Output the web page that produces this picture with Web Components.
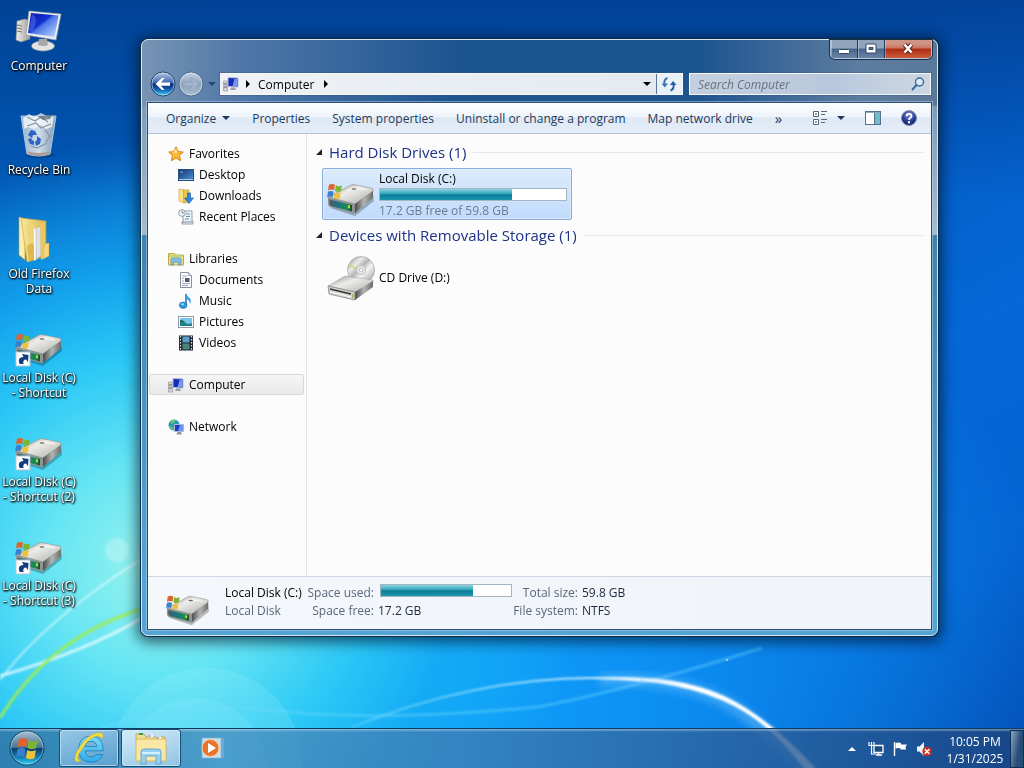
<!DOCTYPE html>
<html lang="en">
<head>
<meta charset="utf-8">
<title>Computer</title>
<style>
html, body { margin: 0; height: 100%; overflow: hidden; }
body { font-family: "Open Sans", "Noto Sans", sans-serif; font-size: 12px; line-height: 15px; color: #000; }
</style>
</head>
<body>
<win-desktop></win-desktop>
<script>
const RESET = `
  *, *::before, *::after { box-sizing: border-box; }
  button, a, input { font: inherit; color: inherit; background: none; border: 0; padding: 0; margin: 0; text-decoration: none; }
`;

const FLAG = (x, y, s) => `<g transform="translate(${x} ${y}) scale(${s})">
  <path d="M1 2q3-2 6.500 0l-1 6q-3-2-6.500 0z" fill="#e0622c"/><path d="M8.500 2.500q3 2 6.500 0l-1 6q-3 2-6.500 0z" fill="#7cb434"/>
  <path d="M0 9.500q3-2 6 0l-1 6q-3-2-6 0z" fill="#3c80cc"/><path d="M7.300 10q3 2 6.500 0l-1 6q-3 2-6.500 0z" fill="#f0c038"/></g>`;

const METAL = `<defs>
  <linearGradient id="top" x1="0" y1="0" x2="1" y2="1"><stop offset="0" stop-color="#8a8a88"/><stop offset=".4" stop-color="#ecece8"/><stop offset="1" stop-color="#acaca8"/></linearGradient>
  <linearGradient id="side" x1="0" y1="0" x2="1" y2="0"><stop offset="0" stop-color="#4a4a4a"/><stop offset=".5" stop-color="#b4b4b2"/><stop offset="1" stop-color="#6c6c6a"/></linearGradient>
  <linearGradient id="teal" x1="0" y1="0" x2="1" y2="0"><stop offset="0" stop-color="#4a5a60"/><stop offset=".4" stop-color="#1c7480"/><stop offset=".8" stop-color="#1c8c50"/><stop offset="1" stop-color="#26402c"/></linearGradient></defs>`;

const DRIVE = METAL + `<path d="M3 38L28 46L47 31L46 24z" fill="#000" opacity=".25"/>
  <path d="M2 27L24 15Q26 14 29 15L44 18Q47 19 46 21L28 34z" fill="url(#top)" stroke="#8c8c8a" stroke-width=".6"/>
  <path d="M28 34L46 21V28L28 43z" fill="url(#side)"/>
  <path d="M1 27L28 34V43.500L3 37Q1 36 1 34z" fill="#8e9494"/>
  <path d="M2.500 29.500L25 35V41.500L4 36Q2.500 35 2.500 33z" fill="url(#teal)"/>
  <path d="M21 35l2 .5v3l-2-.5z" fill="#a8e830"/><path d="M20 21L26 18L40 20" stroke="#fff" fill="none" opacity=".8"/>
  <ellipse cx="27" cy="19" rx="2.500" ry=".8" fill="#666"/>` + FLAG(1, 13, .93);

const ICONS = {
  drive: [48, DRIVE],
  shortcut: [48, DRIVE + `<rect x="1" y="32" width="14" height="14" fill="#fff" stroke="#b8c4d0"/><path d="M4.500 44Q2 37 8.500 37L7 34L13.500 35L13 42L11 39.500Q7.500 39.500 8.500 44z" fill="#123c80"/>`],
  cd: [48, METAL + `<defs><linearGradient id="disc" x1="0" y1="0" x2="1" y2="1"><stop offset="0" stop-color="#8a8a8a"/><stop offset=".3" stop-color="#ececec"/><stop offset=".45" stop-color="#b4b4b4"/><stop offset=".6" stop-color="#f4f4f4"/><stop offset="1" stop-color="#949494"/></linearGradient></defs>
   <circle cx="34" cy="17" r="13.500" fill="url(#disc)" stroke="#a0a0a0" stroke-width=".7"/><path d="M22 12L30 16" stroke="#c8d870" stroke-width="2" opacity=".7"/><circle cx="34" cy="17" r="4.500" fill="#e8e8e8" stroke="#bbb"/><circle cx="34" cy="17" r="1.800" fill="#fff" stroke="#999" stroke-width=".6"/>
   <path d="M1 33L18 23L46 27V30L28 40z" fill="url(#top)" stroke="#999" stroke-width=".5"/><path d="M28 39L46 28V34L28 47z" fill="url(#side)"/><path d="M1 33L28 39V47L2 41z" fill="#d4d4d2" stroke="#777" stroke-width=".7"/><path d="M3 36L24 41" stroke="#333" stroke-width="1.500"/><path d="M3 39L24 44" stroke="#fff"/><path d="M26 41v4" stroke="#8a2" stroke-width="1.200"/>`],
  computer: [48, `<defs><linearGradient id="scr" x1="0" y1="0" x2="1" y2="1"><stop offset="0" stop-color="#0818a0"/><stop offset=".42" stop-color="#1430d0"/><stop offset=".5" stop-color="#4c78e8"/><stop offset="1" stop-color="#c8e0fc"/></linearGradient>
   <linearGradient id="tw" x1="0" y1="0" x2="1" y2="0"><stop offset="0" stop-color="#f0f0ec"/><stop offset="1" stop-color="#9c9c98"/></linearGradient></defs>
   <path d="M2 13L10 11L15 13V31L6 34L1 32z" fill="url(#tw)" stroke="#8a8a86" stroke-width=".6"/><path d="M2 17l5 1M2 20l5 1M2 23l5 1" stroke="#777"/>
   <ellipse cx="28" cy="38" rx="11.500" ry="5" fill="#e4e4e2" stroke="#989898" stroke-width=".6"/><path d="M24 31h8l1 6q-5 2-10 0z" fill="#a8a8a8"/>
   <path d="M14 3L46 6L41 32L11 27z" fill="#eceef0" stroke="#9aa0a8" stroke-width=".7"/><path d="M16 5L43.500 7.500L39.500 29L13 25z" fill="url(#scr)"/><path d="M17 6q8 4 0 18l-3-1z" fill="#4c70e8" opacity=".55"/>`],
  bin: [48, `<defs><linearGradient id="b" x1="0" y1="0" x2="1" y2="0"><stop offset="0" stop-color="#a8bccc"/><stop offset=".5" stop-color="#e8eef2"/><stop offset="1" stop-color="#90a4b8"/></linearGradient></defs>
   <ellipse cx="25" cy="43" rx="15" ry="3" fill="#023" opacity=".3"/><path d="M6 4L12 42Q24 46 35 42L41 4z" fill="url(#b)" opacity=".9" stroke="#c4d8e4"/>
   <path d="M8 6l6-4 5 3 7-4 6 3 7 1-2 10-6 2-5-4-7 4-6-2-4 2z" fill="#fff" opacity=".7"/><path d="M12 5l8 4 6-4 7 5M12 14l9-3 5 5 10-4M30 18l5 6-4 6M16 34l6 2 10-5" stroke="#8494a4" fill="none" stroke-width="1.200"/>
   <path d="M22 4l15-1-2 4-7 1z" fill="#566472" opacity=".7"/><path d="M13 23l3-5 4 1 2 4-4 0-1 3zM22 24l4 3-1 5-4 2-1-4 2-2zM13 27l2 5 4 1v-4l-2-1-1-2z" fill="#2c64c8"/>
   <path d="M12 39q12 4 23 0v3q-12 4-22 0z" fill="#b09c9c"/>`],
  folder: [48, `<defs><linearGradient id="f" x1="0" y1="0" x2="1" y2="0"><stop offset="0" stop-color="#f8e8a0"/><stop offset="1" stop-color="#dcb448"/></linearGradient></defs>
   <path d="M4 1L10 3V44L4 39z" fill="#fbeeb0" stroke="#c8a030" stroke-width=".6"/><path d="M6 2L31 5V40L12 46z" fill="url(#f)" stroke="#c8a030" stroke-width=".6"/><path d="M13 10L19 8V42L13 45z" fill="#f0d478"/>
   <path d="M19 13L23 11V42L19 45z" fill="#fff"/><path d="M21 12L26 10V40L21 43z" fill="#dce0e6" stroke="#a0a0a0" stroke-width=".5"/><path d="M25 8L30 6V42L26 44z" fill="#ecc860"/><path d="M29 28l5-1v13l-6 3z" fill="#f4d87c" stroke="#c8a030" stroke-width=".4"/><path d="M12 30l5-3 2 2v15l-5 2z" fill="#dcb040" opacity=".8"/>`],
  star: [16, `<path d="M8 .8L10.200 5.600L15.300 6.100L11.500 9.500L12.700 14.800L8 12L3.300 14.800L4.500 9.500L.7 6.100L5.800 5.600z" fill="#fbb938" stroke="#dd8418"/><path d="M8 2.500L9.300 6.500L5 7z" fill="#ffe9a0"/>`],
  desktop: [16, `<defs><linearGradient id="g" x2="1" y2="1"><stop offset="0" stop-color="#14386c"/><stop offset="1" stop-color="#4c90dc"/></linearGradient></defs><rect x=".5" y="2.500" width="15" height="11" fill="url(#g)" stroke="#284c80"/><path d="M1 12.500h14" stroke="#a8c8ec"/><path d="M2 5h3" stroke="#8ac"/>`],
  downloads: [16, `<path d="M1 1l5 1v13l-5-2z" fill="#f8e48c" stroke="#d0a838" stroke-width=".7"/><path d="M5 2h6v12l-5 1z" fill="#ecc850" stroke="#c8a030" stroke-width=".7"/><path d="M9.500 5h3v5h3L11 15.500L6.500 10h3z" fill="#2c84dc" stroke="#1858a8" stroke-width=".6"/>`],
  recent: [16, `<path d="M5 2h9v10h1v3H4v-2h1z" fill="#eef2f6" stroke="#7c8a98" stroke-width=".8"/><path d="M8 5h4M8 7.500h4M7 10h4" stroke="#5c94c0"/><circle cx="4" cy="4" r="3.300" fill="#fff" stroke="#8898a8"/><path d="M4 2v2h2" stroke="#456" fill="none" stroke-width=".8"/><path d="M4 13h10" stroke="#7a8a9a"/>`],
  libraries: [16, `<path d="M.5 2.500h6l1 1.500h8v10H.5z" fill="#f4dc84" stroke="#c8a440"/><path d="M1 4h13v2H1z" fill="#b8d880"/><path d="M3 14V8.500q0-1.500 1.500-1.500h7q1.500 0 1.500 1.500V14h-2.500v-3h-5v3z" fill="#84c0e4" stroke="#4c90c0" stroke-width=".7"/>`],
  documents: [16, `<path d="M2.500 .5h8l3 3v12h-11z" fill="#fbfbfb" stroke="#8a929c"/><path d="M10.500.5v3h3" fill="#dde" stroke="#8a929c" stroke-width=".7"/><path d="M4 4h5M4 6.500h2M4 9h2M4 11.500h8M4 13.500h6" stroke="#9caabc"/><rect x="7" y="6" width="4.500" height="4" fill="#4a5c78"/>`],
  music: [16, `<path d="M8 1v11" stroke="#2478c0" stroke-width="1.600"/><ellipse cx="5.200" cy="12.200" rx="3.800" ry="3.200" fill="#2c98dc" stroke="#1c68ac" stroke-width=".6"/><path d="M8 0q1 3 3.500 5 2.500 2 .5 6 0-4-4-5z" fill="#3c9ce0"/><ellipse cx="4.500" cy="11.200" rx="1.500" ry="1" fill="#a8dcf8"/>`],
  pictures: [16, `<rect x=".5" y="2.500" width="15" height="11" fill="#fff" stroke="#8c9cac"/><rect x="2" y="4" width="12" height="8" fill="#78c4ec"/><path d="M2 7q4 0 6 2t6 0v3H2z" fill="#208484"/><path d="M2 6q3 0 5 2H2z" fill="#1c5c48"/>`],
  videos: [16, `<rect x="1" y=".5" width="14" height="15" fill="#1c2430"/><path d="M2.500 1v14M13.500 1v14" stroke="#d8e4f0" stroke-width="1.200" stroke-dasharray="1.500 1.500"/><rect x="4.500" y="1.500" width="7" height="6" fill="#5c9cc8"/><rect x="4.500" y="8.500" width="7" height="6" fill="#4c8478"/>`],
  pc: [16, `<path d="M.5 5h4v10h-4z" fill="#d0d0d4" stroke="#8a8a98" stroke-width=".6"/><path d="M1 8h3M1 11h3" stroke="#667"/><path d="M5 1.500l10 .5v9l-10-.5z" fill="#142cb8" stroke="#b4bcd4"/><path d="M11.500 3h3v7h-5z" fill="#7498ec"/><path d="M8 11.500h4l1 2.500H7z" fill="#9aa0ac"/>`],
  network: [16, `<circle cx="6" cy="6" r="5.500" fill="#2898b8"/><path d="M2 3q3-3 6-2l-2 3-3 1zM1 7l4 1 1 3q-4-1-5-4z" fill="#60c878"/><path d="M6.500 5.500h9v7h-9z" fill="#1c3cc8" stroke="#a8b8d8"/><path d="M12 6h3v6h-5z" fill="#6c94ec"/><path d="M9.500 13h3.500l1 2.500H8.500z" fill="#8c94a4"/>`],
  back: [26, `<defs><linearGradient id="k" x2="0" y2="1"><stop offset="0" stop-color="#b8cce4"/><stop offset=".45" stop-color="#3c68b0"/><stop offset=".5" stop-color="#0c2870"/><stop offset=".75" stop-color="#1468b8"/><stop offset="1" stop-color="#48d8f8"/></linearGradient></defs>
   <circle cx="13" cy="13" r="12" fill="url(#k)" stroke="#24406c"/><circle cx="13" cy="13" r="11" fill="none" stroke="#d8e8f8" opacity=".6"/><path d="M5.500 13L12 7h2.500l-3.500 4.500H20v3.200H11L14.500 19H12z" fill="#fff"/>`],
  forward: [26, `<defs><linearGradient id="k" x2="0" y2="1"><stop offset="0" stop-color="#c8d4e2"/><stop offset=".5" stop-color="#8ca4c0"/><stop offset="1" stop-color="#a8bcd2"/></linearGradient></defs>
   <circle cx="13" cy="13" r="12" fill="url(#k)" stroke="#4c6888"/><circle cx="13" cy="13" r="11" fill="none" stroke="#e8f0f8" opacity=".6"/><path d="M20.500 13L14 7h-2.500l3.500 4.500H6v3.200H15L11.500 19H14z" fill="#a8b8cc" stroke="#8ca0b8" stroke-width=".6"/>`],
  refresh: [16, `<path d="M6.500 2Q2.500 3 3.500 9" stroke="#3478b8" stroke-width="2" fill="none"/><path d="M.5 7.500h6.500L3.800 11.500z" fill="#3478b8"/><path d="M9.500 14.500Q13.500 13 12.500 8" stroke="#285c9c" stroke-width="2" fill="none"/><path d="M9 9h6.500L12 5z" fill="#285c9c"/>`],
  search: [16, `<circle cx="9.500" cy="6" r="4" fill="#dcecf8" stroke="#3c6898" stroke-width="1.400"/><path d="M6.500 9L2.500 13.500" stroke="#3c6898" stroke-width="2" stroke-linecap="round"/>`],
  views: [16, `<g fill="none" stroke="#5c6878"><path d="M1.500 1.500h5v5h-5zM1.500 9.500h5v5h-5z" fill="#fff"/><path d="M3 4h2M3 12h2" stroke="#246"/><path d="M9 1.500h6M9 4.500h4M9 9.500h6M9 12.500h4"/></g>`],
  pane: [16, `<rect x=".5" y="1.500" width="15" height="13" fill="#fff" stroke="#54708c"/><rect x="10" y="3" width="5" height="11" fill="#70bccc"/><path d="M1 2.500h14" stroke="#90a8c0"/><path d="M9.500 3v11" stroke="#54708c"/>`],
  help: [16, `<defs><radialGradient id="h" cy=".3"><stop offset="0" stop-color="#7c94e4"/><stop offset="1" stop-color="#1c2c84"/></radialGradient></defs><circle cx="8" cy="8" r="7.500" fill="url(#h)" stroke="#8c90a8"/><path d="M5.500 6.200Q5.500 3.800 8 3.800T10.500 6Q10.500 7.400 8.800 8.200Q8 8.600 8 10" fill="none" stroke="#fff" stroke-width="1.800"/><circle cx="8" cy="12.300" r="1.200" fill="#fff"/>`],
  orb: [40, `<defs><linearGradient id="o" x2="0" y2="1"><stop offset="0" stop-color="#a8c0d4"/><stop offset=".48" stop-color="#487898"/><stop offset=".52" stop-color="#0c3c6c"/><stop offset=".8" stop-color="#1088c0"/><stop offset="1" stop-color="#40d8f8"/></linearGradient></defs>
   <circle cx="20" cy="20" r="18" fill="url(#o)" stroke="#16405e"/><circle cx="20" cy="20" r="17" fill="none" stroke="#c0e4f4" opacity=".5"/>` + FLAG(10, 8, 1.4)],
  ie: [36, `<defs><linearGradient id="e" x2="0" y2="1"><stop offset="0" stop-color="#78d8f8"/><stop offset="1" stop-color="#30acec"/></linearGradient></defs>
   <path fill-rule="evenodd" d="M33 21H14Q14.500 27.500 20 27.500Q24 27.500 25.500 25H32.500Q29.500 33 20 33Q7 32.500 7 19Q7.500 5.500 20 5.500Q33.500 5.500 33 21zM14.200 16.500H26.200Q25.500 11 20.200 11Q15 11 14.200 16.500z" fill="url(#e)" stroke="#1874b4" stroke-width=".8"/>
   <path d="M6 33Q-1 31 8 17T27 2Q33 1 33 6L31 8Q30.500 4 24 6T10 20Q3 30 9 31z" fill="#f4dc3c" stroke="#c8a824" stroke-width=".5"/>`],
  explorer: [36, `<path d="M3 4h8l2 3h19v3H3z" fill="#f0dc90" stroke="#c4a044" stroke-width=".8"/><path d="M6 4h4" stroke="#3a9c50" stroke-width="2"/><path d="M15 6h5M23 8h5" stroke="#fff" stroke-width="2.500"/><path d="M15 6h3M23 8h3" stroke="#4878b0"/><path d="M3 9h30v22H3z" fill="#f8e8a4" stroke="#d4b050" stroke-width=".8"/><path d="M8 34V22q0-3 3-3h14q3 0 3 3v12h-5v-8H13v8z" fill="#94d0f0" stroke="#5ca0cc" stroke-width=".8"/><path d="M9 23h18" stroke="#d8f0fc" stroke-width="2"/>`],
  wmp: [26, `<rect x="5" y="3" width="19" height="20" fill="#6ca8d0"/><rect x="2" y="3" width="19" height="20" fill="#c4dcec" stroke="#88b4d4" stroke-width=".6"/><circle cx="10.500" cy="13" r="8.500" fill="#e8742c" stroke="#f8d0a8"/><path d="M8 8l8 5-8 5z" fill="#fff"/>`],
  net: [16, `<path d="M6 4.500h9v7H6z" fill="#1c4c80" stroke="#fff" stroke-width="1.300"/><path d="M8 14h6M10.500 12v2" stroke="#fff" stroke-width="1.400"/><path d="M1 1v3.500h5V1M3.500 1v3M3.500 5v8H8" stroke="#fff" fill="none" stroke-width="1.200"/>`],
  flag: [16, `<path d="M2.500 1v14" stroke="#fff" stroke-width="1.400"/><path d="M3.500 2q3-1 5.500 0v1.500h6L13.500 6l.500 2.500H8.500V7.500q-2-1-5 0z" fill="#fff"/>`],
  volume: [16, `<path d="M1 5.500h2.500L8 1v14L3.500 10.500H1z" fill="#eef4fa"/><rect x="6.500" y="6" width="9" height="9" rx="4" fill="#cc3020"/><path d="M8.800 8.200l4.500 4.500M13.300 8.200l-4.500 4.500" stroke="#fff" stroke-width="1.600"/>`]
};

const define = (tag, template) => customElements.define(tag, class extends HTMLElement {
  constructor() { super(); this.attachShadow({ mode: "open" }); }
  connectedCallback() {
    this.shadowRoot.innerHTML = typeof template === "function" ? template(this) : template;
  }
});

define("win-icon", el => {
  const [size, art] = ICONS[el.getAttribute("name")];
  const px = el.getAttribute("size") || size;
  return `<style>:host{display:block;flex:none;width:${px}px;height:${px}px}svg{display:block}</style>
    <svg width="${px}" height="${px}" viewBox="0 0 ${size} ${size}" aria-hidden="true">${art}</svg>`;
});

define("win-caret", `<style>
  :host { display: block; flex: none; border: 4px solid transparent; border-top-color: currentColor; border-bottom: 0; }
  :host([dir-to=right]) { border: 4px solid transparent; border-left-color: currentColor; border-right: 0; }
  :host([dir-to=up]) { border: 4px solid transparent; border-bottom-color: currentColor; border-top: 0; }
</style>`);

define("win-wallpaper", `<style>
  :host { display: block; background:
      radial-gradient(circle farthest-side at 15% 74%, #98f4ec 0, #64e4f4 110px, #2cc8f6 210px, #14acf4cc 300px, #0890ec00 430px) no-repeat,
      radial-gradient(700px 560px at 36% 90%, #14a8fc 0%, #0c90f4 40%, #0468d800 100%),
      linear-gradient(150deg, #0058b4 0%, #0458bc 40%, #0468d8 65%, #0464d4 82%, #0348ac 100%); }
  .shade { position: absolute; inset: 0; background: linear-gradient(#00307c88 0%, #00307c00 26%); }
  svg { position: absolute; inset: 0; width: 100%; height: 100%; }
</style>
<div class="shade"></div>
<svg viewBox="0 0 1024 768" preserveAspectRatio="none" aria-hidden="true">
  <defs><linearGradient id="arc"><stop offset="0" stop-color="#a0ecff" stop-opacity=".3"/><stop offset="1" stop-color="#e8faff"/></linearGradient>
  <linearGradient id="beam"><stop offset="0" stop-color="#fff" stop-opacity=".6"/><stop offset=".4" stop-color="#fff"/></linearGradient>
  <filter id="soft"><feGaussianBlur stdDeviation="4"/></filter><filter id="soft1"><feGaussianBlur stdDeviation="1"/></filter></defs>
  <circle cx="206" cy="764" r="96" fill="#a8f4fc" opacity=".18"/><circle cx="195" cy="770" r="72" fill="#c8fcfc" opacity=".1"/><circle cx="117" cy="550" r="12" fill="#fff" opacity=".25" filter="url(#soft1)"/>
  <g fill="none" filter="url(#soft1)"><path d="M0 676Q90 650 145 616" stroke="#f0ffff" stroke-width="3" opacity=".75"/>
  <path d="M0 680Q30 640 80 602T145 559" stroke="#f0ffff" stroke-width="2" opacity=".6"/>
  <path d="M0 718Q50 636 145 608" stroke="#a0ec50" stroke-width="3" opacity=".9"/>
  <path d="M100 728Q180 700 280 711T537 707Q620 692 762 648" stroke="#70dcfc" stroke-width="3" opacity=".4"/>
  <path d="M352 727Q500 668 640 680" stroke="url(#arc)" stroke-width="2"/></g>
  <path d="M600 680Q690 676 742 712Q780 745 815 775" stroke="#8cd4ff" stroke-width="12" fill="none" filter="url(#soft)" opacity=".4"/>
  <path d="M590 679Q680 671 736 702Q780 727 824 778L811 778Q776 728 734 706Q680 678 590 679z" fill="url(#beam)" filter="url(#soft1)"/>
  <circle cx="727" cy="660" r="1" fill="#b8e0fc"/>
</svg>`);

define("desk-icon", el => `<style>${RESET}
  :host { display: block; width: 78px; height: 104px; }
  button { display: flex; flex-direction: column; align-items: center; gap: 2px; width: 100%; color: #fff; }
  span { width: 76px; text-align: center; text-shadow: 0 1px 2px #000, 1px 1px 2px #000, 0 0 3px #0008; }
</style><button type="button"><win-icon name="${el.getAttribute("icon")}"></win-icon><span><slot></slot></span></button>`);

define("title-bar", `<style>${RESET}
  :host { display: flex; justify-content: flex-end; height: 31px; }
  .caption { display: flex; height: 19px; border: 1px solid #e4eef8aa; border-top: 0; border-radius: 0 0 5px 5px; box-shadow: 0 0 0 1px #18304c; overflow: hidden; }
  button { display: grid; place-items: center; width: 27px; height: 100%; background: linear-gradient(#90a4bc 0 45%, #44648c 50%, #6c84a4); border-right: 1px solid #20385a; box-shadow: inset 1px 0 #ffffff55; }
  .close { width: 46px; border: 0; background: linear-gradient(#d09484 0 20%, #c87460 45%, #b02c14 50%, #cc5c3c); }
  svg { display: block; }
</style>
<div class="caption">
  <button type="button" aria-label="Minimize"><svg width="14" height="12"><rect x="1.500" y="6.500" width="11" height="4" rx="1" fill="#fff" stroke="#34486a"/></svg></button>
  <button type="button" aria-label="Maximize"><svg width="14" height="12"><path d="M2 1h10v9H2z" fill="#fff" stroke="#34486a"/><path d="M5 4.500h4v2H5z" fill="#50709a" stroke="#34486a"/></svg></button>
  <button type="button" class="close" aria-label="Close"><svg width="14" height="12"><path d="M3.500 1.500l7 8M10.500 1.500l-7 8" stroke="#5c1c10" stroke-width="4.500"/><path d="M3.500 1.500l7 8M10.500 1.500l-7 8" stroke="#fff" stroke-width="2.600"/></svg></button>
</div>`);

define("address-row", `<style>${RESET}
  :host { display: flex; align-items: center; height: 26px; padding: 0 1px 0 3px; }
  .nav { display: flex; align-items: center; gap: 2px; margin-right: 4px; color: #1c4878; }
  .nav win-caret { margin-left: 2px; }
  .field { display: flex; align-items: center; height: 22px; border: 1px solid #f4f8fc; box-shadow: 0 0 0 1px #38587c66; }
  .path { flex: 1; background: linear-gradient(90deg, #eef2f6, #e4eaf1); padding-left: 2px; }
  .path > win-icon { margin-right: 7px; }
  .crumb { padding: 0 9px 0 8px; }
  .grow { flex: 1; }
  .drop { padding: 0 5px; }
  .refresh { display: grid; place-items: center; width: 26px; height: 20px; border-left: 1px solid #5c7898; background: #eaf0f7; }
  .search { flex: none; width: 31%; margin-left: 6px; padding: 0 4px 0 8px; background: linear-gradient(90deg, #c4d0df, #b8c8dc 60%, #cdd8e4); }
  input { flex: 1; min-width: 0; height: 20px; outline: 0; font-style: italic; }
  input::placeholder { color: #66727f; opacity: 1; }
</style>
<div class="nav"><button type="button" aria-label="Back"><win-icon name="back"></win-icon></button><button type="button" aria-label="Forward"><win-icon name="forward"></win-icon></button><win-caret></win-caret></div>
<div class="field path"><win-icon name="pc"></win-icon><win-caret dir-to="right"></win-caret><button type="button" class="crumb">Computer</button><win-caret dir-to="right"></win-caret><span class="grow"></span>
<button type="button" class="drop" aria-label="Previous locations"><win-caret></win-caret></button><button type="button" class="refresh" aria-label="Refresh"><win-icon name="refresh"></win-icon></button></div>
<div class="field search"><input type="search" placeholder="Search Computer" aria-label="Search Computer"><win-icon name="search"></win-icon></div>`);

define("command-bar", `<style>${RESET}
  :host { display: flex; align-items: center; gap: 22px; height: 31px; padding: 0 14px 0 18px; color: #1e395b; white-space: nowrap;
    background: linear-gradient(#fdfeff, #eef4fb 45%, #dfe9f5 50%, #e4edf8); border-bottom: 1px solid #b4c4d8; }
  button { display: flex; align-items: center; gap: 6px; }
  .tools { display: flex; align-items: center; margin-left: auto; gap: 20px; }
  .views { gap: 9px; }
  .more { font-size: 15px; }
</style>
<button type="button">Organize <win-caret></win-caret></button><button type="button">Properties</button><button type="button">System properties</button><button type="button">Uninstall or change a program</button><button type="button">Map network drive</button>
<button type="button" class="more" aria-label="More commands">»</button>
<div class="tools"><button type="button" class="views" aria-label="Change your view"><win-icon name="views"></win-icon><win-caret></win-caret></button>
<button type="button" aria-label="Preview pane"><win-icon name="pane"></win-icon></button><button type="button" aria-label="Help"><win-icon name="help"></win-icon></button></div>`);

define("nav-item", el => `<style>${RESET}
  :host { display: block; }
  a { display: flex; align-items: center; gap: 5px; height: 21px; padding-left: 18px; border: 1px solid transparent; white-space: nowrap; }
  :host([child]) a { padding-left: 28px; }
  :host([gap]) { margin-top: 21px; }
  :host([current]) a { background: linear-gradient(#f6f6f6, #e8e8e8); border-color: #d8d8d8; border-radius: 2px; }
</style><a href="#"><win-icon name="${el.getAttribute("icon")}"></win-icon><slot></slot></a>`);

define("nav-pane", `<style>${RESET}
  :host { display: block; width: 159px; flex: none; padding: 9px 2px 0 1px; border-right: 1px solid #dfe5ee; }
</style>
<nav aria-label="Locations">
<nav-item icon="star">Favorites</nav-item><nav-item child icon="desktop">Desktop</nav-item><nav-item child icon="downloads">Downloads</nav-item><nav-item child icon="recent">Recent Places</nav-item>
<nav-item gap icon="libraries">Libraries</nav-item><nav-item child icon="documents">Documents</nav-item><nav-item child icon="music">Music</nav-item><nav-item child icon="pictures">Pictures</nav-item><nav-item child icon="videos">Videos</nav-item>
<nav-item gap current icon="pc">Computer</nav-item><nav-item gap icon="network">Network</nav-item>
</nav>`);

define("capacity-bar", `<style>
  :host { display: block; }
  progress { display: block; appearance: none; width: 100%; height: 13px; border: 1px solid #a4b4c0; background: #fff; }
  progress::-webkit-progress-bar { background: #fff; }
  progress::-webkit-progress-value { background: linear-gradient(#8cd4e0 0%, #38a8bc 40%, #0c7c98 55%, #1c98ac 100%); }
</style><progress max="100" value="71" aria-label="Space used"></progress>`);

define("drive-group", el => `<style>${RESET}
  :host { display: block; }
  header { display: flex; align-items: center; gap: 7px; height: 31px; padding-bottom: 1px; color: #1e3287; }
  h2 { margin: 0; font-size: 15px; line-height: 20px; font-weight: 400; white-space: nowrap; }
  hr { flex: 1; border: 0; border-top: 1px solid #e2e6ee; margin: 0; }
  svg { display: block; flex: none; }
</style><header><svg width="6" height="6" aria-hidden="true"><path d="M6 0V6H0z" fill="#222"/></svg><h2>${el.getAttribute("heading")}</h2><hr></header><slot></slot>`);

define("drive-tile", el => `<style>${RESET}
  :host { display: block; margin-left: 6px; }
  button { display: flex; align-items: center; gap: 4px; width: 250px; height: 52px; padding: 0 4px; border: 1px solid transparent; text-align: left; }
  :host([selected]) button { background: linear-gradient(#dcebfc, #c1dbfc); border-color: #84acdd; border-radius: 2px; box-shadow: inset 0 0 0 1px #eaf4ff88; }
  .text { display: flex; flex-direction: column; flex: 1; gap: 2px; }
  small { font-size: 12px; color: #6c7c90; }
</style><button type="button"><win-icon name="${el.getAttribute("icon")}"></win-icon><span class="text"><span><slot></slot></span>${
  el.hasAttribute("detail") ? `<capacity-bar></capacity-bar><small>${el.getAttribute("detail")}</small>` : ""}</span></button>`);

define("file-list", `<style>
  :host { display: block; flex: 1; min-width: 0; padding: 3px 8px 0 9px; }
</style>
<drive-group heading="Hard Disk Drives (1)"><drive-tile selected icon="drive" detail="17.2 GB free of 59.8 GB">Local Disk (C:)</drive-tile></drive-group>
<drive-group heading="Devices with Removable Storage (1)"><drive-tile icon="cd">CD Drive (D:)</drive-tile></drive-group>`);

define("details-pane", `<style>${RESET}
  :host { display: flex; gap: 15px; height: 53px; padding: 6px 18px; background: linear-gradient(90deg, #f4f7fb, #f0f4fa); border-top: 1px solid #ccd6e4; }
  dl { display: grid; grid-template: 18px 18px / 82px 63px 136px 60px auto; column-gap: 4px; align-items: center; margin: 0; color: #5a6779; white-space: nowrap; }
  dt { justify-self: end; } dd { margin: 0; color: #1e2a3c; }
  .name { justify-self: start; color: #000; } .kind { justify-self: start; }
  capacity-bar { margin: 0 2px 4px 2px; }
</style>
<win-icon name="drive" size="44"></win-icon>
<dl><dt class="name">Local Disk (C:)</dt><dt>Space used:</dt><dd><capacity-bar></capacity-bar></dd><dt>Total size:</dt><dd>59.8 GB</dd>
<dt class="kind">Local Disk</dt><dt>Space free:</dt><dd>17.2 GB</dd><dt>File system:</dt><dd>NTFS</dd></dl>`);

define("explorer-window", `<style>${RESET}
  :host { display: flex; flex-direction: column; padding: 0 5px 5px; border: 1px solid #d4e6f4; border-radius: 7px;
    background:
      linear-gradient(90deg, #7894b4 0, #5078a8 12%, #1c5490 40%, #1c5490 70%, #5c7ca0 90%, #5a7898 100%) 0 0 / 100% 66px no-repeat,
      linear-gradient(#6c8cac, #a4bcd0 195px, #3c84b0 195px, #54a4d4 90%);
    box-shadow: 0 0 0 1px #0c2c48, 0 2px 14px 4px #001428aa; }
  .client { display: flex; flex-direction: column; flex: 1; min-height: 0; border: 1px solid #2c4c70; background: #fcfcfc; margin-top: 5px; box-shadow: 0 0 0 1px #b4d0e888; }
  .body { display: flex; flex: 1; min-height: 0; }
</style>
<title-bar></title-bar><address-row></address-row>
<div class="client"><command-bar></command-bar><div class="body"><nav-pane></nav-pane><file-list></file-list></div><details-pane></details-pane></div>`);

define("task-bar", `<style>${RESET}
  :host { display: flex; height: 39px; color: #fff; border-top: 1px solid #0c3c64;
    background: linear-gradient(#ffffff66, #ffffff00 3px), linear-gradient(90deg, #3070a0cc 0, #4890c0cc 22%, #3c7cb4cc 45%, #2c609ccc 70%, #1c447ccc 100%); }
  button { display: grid; place-items: center; height: 38px; }
  .start { width: 53px; margin-right: 6px; }
  .app { width: 60px; border: 1px solid #1c4c74; border-radius: 3px; margin-right: 2px; background: linear-gradient(160deg, #a8d0ecdd, #5ca0d0dd); box-shadow: inset 0 0 0 1px #d0ecfcaa; }
  .active { background: linear-gradient(160deg, #d4ecf8, #90c4e4); }
  .pinned { width: 60px; }
  .tray { display: flex; align-items: center; gap: 8px; margin-left: auto; }
  .up { margin-right: 4px; }
  .clock { width: 70px; display: block; text-align: center; line-height: 17px; padding-top: 2px; }
  .show { width: 14px; border: 1px solid #0c3054; background: linear-gradient(100deg, #88a4c0, #284c78 60%); margin-left: -8px; }
</style>
<button type="button" class="start" aria-label="Start"><win-icon name="orb" size="38"></win-icon></button>
<button type="button" class="app" aria-label="Internet Explorer"><win-icon name="ie" size="34"></win-icon></button>
<button type="button" class="app active" aria-label="Windows Explorer"><win-icon name="explorer" size="36"></win-icon></button>
<button type="button" class="pinned" aria-label="Windows Media Player"><win-icon name="wmp"></win-icon></button>
<div class="tray"><button type="button" class="up" aria-label="Show hidden icons"><win-caret dir-to="up"></win-caret></button>
<button type="button" aria-label="Network"><win-icon name="net"></win-icon></button><button type="button" aria-label="Action Center"><win-icon name="flag"></win-icon></button><button type="button" aria-label="Volume muted"><win-icon name="volume"></win-icon></button>
<button type="button" class="clock">10:05 PM<br>1/31/2025</button><button type="button" class="show" aria-label="Show desktop"></button></div>`);

define("win-desktop", `<style>
  :host { display: flex; flex-direction: column; position: relative; height: 100vh; overflow: hidden; }
  win-wallpaper { position: absolute; inset: 0; }
  .icons { position: relative; flex: 1; min-height: 0; display: flex; flex-flow: column wrap; align-content: flex-start; padding-top: 8px; }
  explorer-window { position: absolute; inset: 39px 86px 132px 141px; }
  task-bar { position: relative; }
</style>
<win-wallpaper></win-wallpaper>
<div class="icons"><desk-icon icon="computer">Computer</desk-icon><desk-icon icon="bin">Recycle Bin</desk-icon><desk-icon icon="folder">Old Firefox Data</desk-icon><desk-icon icon="shortcut">Local Disk (C) - Shortcut</desk-icon><desk-icon icon="shortcut">Local Disk (C) - Shortcut (2)</desk-icon><desk-icon icon="shortcut">Local Disk (C) - Shortcut (3)</desk-icon></div>
<explorer-window></explorer-window>
<task-bar></task-bar>`);
</script>
</body>
</html>
